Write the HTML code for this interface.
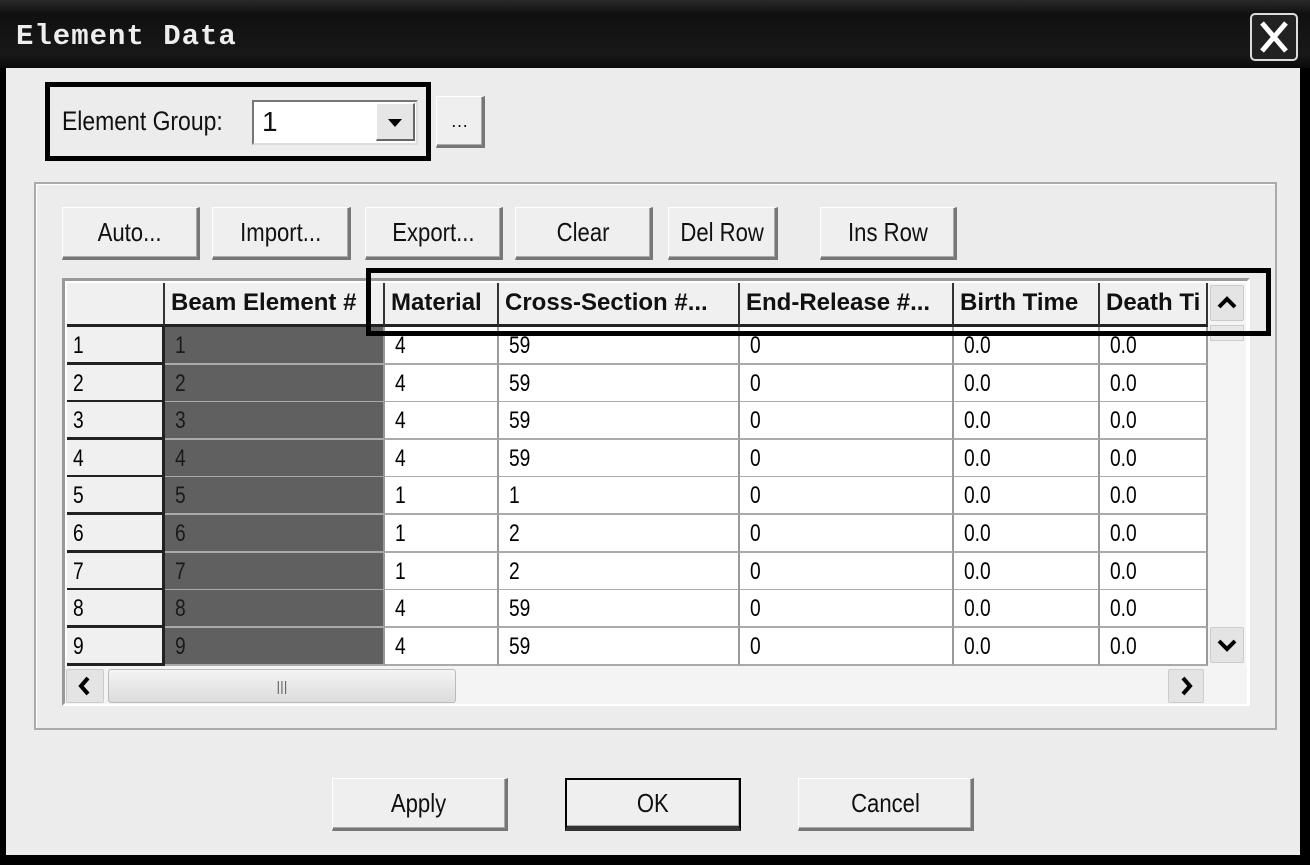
<!DOCTYPE html>
<html><head><meta charset="utf-8"><style>
*{box-sizing:border-box;margin:0;padding:0}
body{width:1310px;height:865px;background:#000;position:relative;overflow:hidden;font-family:"Liberation Sans",sans-serif;color:#111}
.a{position:absolute}
.title{left:0;top:0;width:1310px;height:68px;background:linear-gradient(#2a2a2a,#101010 20%,#181818 80%,#0a0a0a)}
.ttext{left:16px;top:20px;font-family:"Liberation Mono",monospace;font-weight:bold;font-size:29px;color:#eee;letter-spacing:1px}
.close{left:1250px;top:13px;width:48px;height:48px;border:2px solid #ddd;border-radius:5px;background:#222}
.body{left:6px;top:68px;width:1294px;height:787px;background:#ececec}
.btn{position:absolute;background:#efefef;border:1px solid #fff;border-right:3px solid #777;border-bottom:3px solid #777;box-shadow:inset -1px -1px 0 #aaa;display:flex;align-items:center;justify-content:center;font-size:26px;transform-origin:center}
.btn span{display:inline-block;transform:scaleX(.85)}
.grp{left:34px;top:182px;width:1243px;height:548px;border:2px solid #aaa;box-shadow:inset 1px 1px 0 #fff}
.hl{border:5px solid #000}
.cell{position:absolute;border-right:2px solid #999;border-bottom:2px solid #aaa;background:#fff;font-size:24px;padding-left:10px;line-height:38px;color:#000}
.cell span{display:inline-block;transform:scaleX(.8);transform-origin:left}
.rh{background:#f0f0f0;border-right:3px solid #222;border-bottom:3px solid #222;padding-left:6px}
.dk{background:#606060;color:#1a1a1a}
.hd{position:absolute;background:#f0f0f0;border-right:2px solid #333;border-bottom:3px solid #222;font-weight:bold;font-size:24px;padding-left:6px;line-height:40px;white-space:nowrap;overflow:hidden}
.sb{position:absolute;background:#e4e4e4;border:1px solid #ccc;border-radius:2px}
</style></head><body>
<div class="a title"></div>
<div class="a ttext">Element Data</div>
<div class="a close"><svg width="44" height="44"><path d="M10 8L34 36M34 8L10 36" stroke="#fff" stroke-width="5"/></svg></div>
<div class="a body"></div>

<div class="a hl" style="left:45px;top:82px;width:386px;height:79px"></div>
<div class="a" style="left:62px;top:106px;font-size:27px"><span style="display:inline-block;transform:scaleX(.85);transform-origin:left">Element Group:</span></div>
<div class="a" style="left:252px;top:100px;width:166px;height:45px;background:#fff;border:2px solid #777;border-right-color:#ddd;border-bottom-color:#ddd;font-size:28px;padding-left:8px;line-height:40px">1</div>
<div class="a" style="left:376px;top:103px;width:39px;height:38px;background:#e6e6e6;border:1px solid #fff;border-right:2px solid #666;border-bottom:2px solid #666"><svg width="36" height="36"><path d="M11 15h14l-7 8z" fill="#000"/></svg></div>
<div class="btn" style="left:436px;top:96px;width:49px;height:52px;font-size:18px">…</div>

<div class="a grp"></div>
<div class="btn" style="left:62px;top:207px;width:138px;height:53px"><span>Auto...</span></div>
<div class="btn" style="left:212px;top:207px;width:139px;height:53px"><span>Import...</span></div>
<div class="btn" style="left:365px;top:207px;width:138px;height:53px"><span>Export...</span></div>
<div class="btn" style="left:515px;top:207px;width:138px;height:53px"><span>Clear</span></div>
<div class="btn" style="left:668px;top:207px;width:110px;height:53px"><span>Del Row</span></div>
<div class="btn" style="left:820px;top:207px;width:137px;height:53px"><span>Ins Row</span></div>

<div class="a" style="left:62px;top:278px;width:1188px;height:428px;background:#fff;border:3px solid #999;border-right-color:#fff;border-bottom-color:#fff"></div>
<div id="g"></div>
<div class="a" style="left:65px;top:666px;width:1182px;height:38px;background:#f4f4f4"></div>
<div class="sb" style="left:66px;top:669px;width:38px;height:34px"><svg width="36" height="32"><path d="M21 8L14 16L21 24" stroke="#000" stroke-width="4" fill="none"/></svg></div>
<div class="a" style="left:108px;top:669px;width:348px;height:34px;background:linear-gradient(#f4f4f4,#dcdcdc);border:1px solid #bbb;border-radius:3px;text-align:center;font-size:14px;line-height:32px;color:#666">|||</div>
<div class="sb" style="left:1168px;top:669px;width:36px;height:34px"><svg width="34" height="32"><path d="M14 8L21 16L14 24" stroke="#000" stroke-width="4" fill="none"/></svg></div>
<div class="a" style="left:1208px;top:283px;width:38px;height:383px;background:#f4f4f4"></div>
<div class="sb" style="left:1210px;top:285px;width:34px;height:36px"><svg width="32" height="34"><path d="M8 21L16 13L24 21" stroke="#000" stroke-width="4" fill="none"/></svg></div>
<div class="a" style="left:1210px;top:325px;width:34px;height:16px;background:#e8e8e8;border:1px solid #ccc"></div>
<div class="sb" style="left:1210px;top:627px;width:34px;height:36px"><svg width="32" height="34"><path d="M8 13L16 21L24 13" stroke="#000" stroke-width="4" fill="none"/></svg></div>

<div class="a hl" style="left:366px;top:268px;width:905px;height:68px"></div>

<div class="btn" style="left:332px;top:778px;width:176px;height:53px"><span>Apply</span></div>
<div class="btn" style="left:565px;top:778px;width:176px;height:53px;border:2px solid #000;border-bottom:5px solid #333"><span>OK</span></div>
<div class="btn" style="left:798px;top:778px;width:176px;height:53px"><span>Cancel</span></div>

<script>
var cols=[[67,98],[165,220],[385,114],[499,241],[740,214],[954,146],[1100,108]];
var hd=["","Beam Element #","Material","Cross-Section #...","End-Release #...","Birth Time","Death Ti"];
var data=[[4,59],[4,59],[4,59],[4,59],[1,1],[1,2],[1,2],[4,59],[4,59]];
var h="";
cols.forEach(function(c,i){h+='<div class="hd" style="left:'+c[0]+'px;top:283px;width:'+c[1]+'px;height:44px">'+hd[i]+'</div>';});
for(var r=0;r<9;r++){var y=327+r*37.6;var v=[r+1,r+1,data[r][0],data[r][1],0,"0.0","0.0"];
cols.forEach(function(c,i){var cl="cell"+(i==0?" rh":"")+(i==1?" dk":"");h+='<div class="'+cl+'" style="left:'+c[0]+'px;top:'+y+'px;width:'+c[1]+'px;height:38px"><span>'+v[i]+'</span></div>';});}
document.getElementById("g").innerHTML=h;
</script>
</body></html>
